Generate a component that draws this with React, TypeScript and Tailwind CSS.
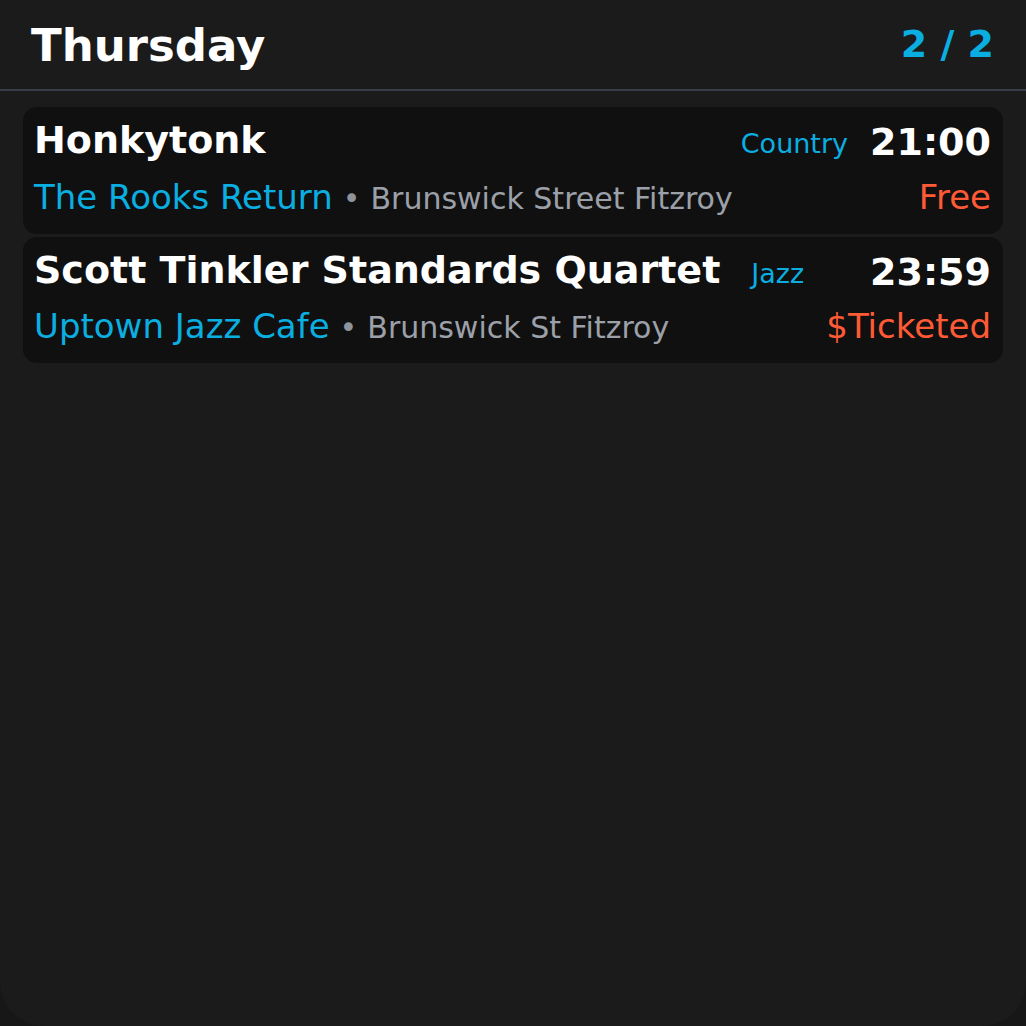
import React from 'react';

type Gig = {
  title: string;
  genre: string;
  time: string;
  venue: string;
  address: string;
  price: string;
  genreNearTime: boolean;
};

const GIGS: Gig[] = [
  {
    title: 'Honkytonk',
    genre: 'Country',
    time: '21:00',
    venue: 'The Rooks Return',
    address: 'Brunswick Street Fitzroy',
    price: 'Free',
    genreNearTime: true,
  },
  {
    title: 'Scott Tinkler Standards Quartet',
    genre: 'Jazz',
    time: '23:59',
    venue: 'Uptown Jazz Cafe',
    address: 'Brunswick St Fitzroy',
    price: '$Ticketed',
    genreNearTime: false,
  },
];

function GigCard({ gig }: { gig: Gig }) {
  return (
    <div className="bg-[#101010] rounded-[14px] pl-[11px] pr-[12px] pt-[12px] pb-[13px]">
      {/* Title row */}
      <div className="flex items-baseline">
        <span className="text-[38px] font-bold text-white leading-[43px]">{gig.title}</span>
        {gig.genreNearTime ? (
          <span className="ml-auto mr-[22px] text-[27px] text-[#0aaee0]">{gig.genre}</span>
        ) : (
          <span className="ml-[31px] mr-auto text-[27px] text-[#0aaee0]">{gig.genre}</span>
        )}
        <span className="text-[38px] font-bold text-white leading-[43px] translate-y-[2px]">{gig.time}</span>
      </div>

      {/* Venue row */}
      <div className="flex items-baseline mt-[11px]">
        <span className="text-[34px] text-[#0aaee0] leading-[40px]">{gig.venue}</span>
        <span className="text-[30px] text-[#8e939c] ml-[10px]">•</span>
        <span className="text-[30px] text-[#9ca0a9] ml-[10px]">{gig.address}</span>
        <span className="ml-auto text-[34px] text-[#ff5a36] leading-[40px]">{gig.price}</span>
      </div>
    </div>
  );
}

export default function App() {
  return (
    <div
      className="w-[1026px] h-[1026px] bg-[#171717]"
      style={{ fontFamily: '"DejaVu Sans", Verdana, sans-serif' }}
    >
      <div className="h-full rounded-b-[44px] bg-[#1b1b1b] overflow-hidden">
        {/* Header */}
        <div className="h-[91px] flex items-center justify-between pl-[31px] pr-[32px] border-b-2 border-[#383d47]">
          <span className="text-[45px] font-bold text-white translate-y-[1px]">Thursday</span>
          <span className="text-[38px] font-bold text-[#0aaee0]">2 / 2</span>
        </div>

        {/* Gig list */}
        <div className="flex flex-col gap-[3px] px-[23px] pt-[16px]">
          {GIGS.map((gig) => (
            <GigCard key={gig.title} gig={gig} />
          ))}
        </div>
      </div>
    </div>
  );
}
